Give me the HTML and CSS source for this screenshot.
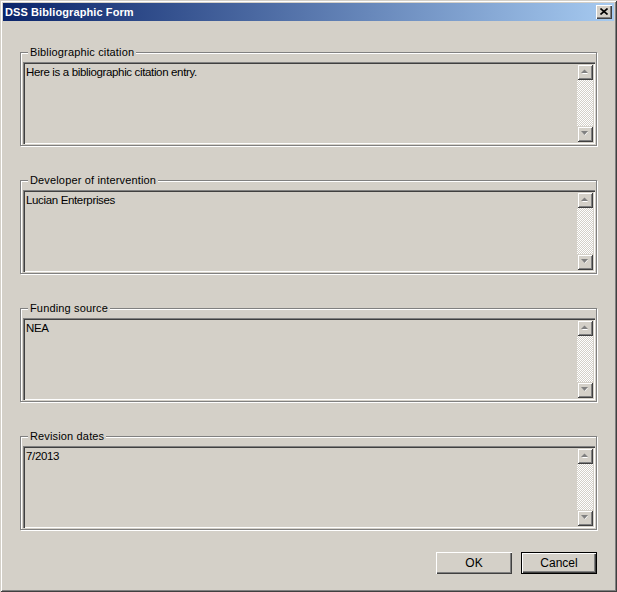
FILE: index.html
```html
<!DOCTYPE html>
<html>
<head>
<meta charset="utf-8">
<title>DSS Bibliographic Form</title>
<link rel="stylesheet" href="styles.css">
</head>
<body>
<div class="window">
  <div class="titlebar">
    <span class="title">DSS Bibliographic Form</span>
    <div class="close">
      <svg width="8" height="7" viewBox="0 0 8 7"><path d="M0.5 0.5 L7.5 6.5 M7.5 0.5 L0.5 6.5" stroke="#000" stroke-width="1.6" fill="none"/></svg>
    </div>
  </div>
  <div class="content">
    <div class="group">
      <div class="legend">Bibliographic citation</div>
      <div class="textbox">
        <div class="text">Here is a bibliographic citation entry.</div>
        <div class="scrollbar">
          <div class="sb-btn"><svg width="7" height="5" viewBox="0 0 7 5"><path d="M1 5 L7 5 L4 2 Z" fill="#fff"/><path d="M0 4 L7 4 L3.5 0.5 Z" fill="#808080"/></svg></div>
          <div class="sb-track"></div>
          <div class="sb-btn"><svg width="7" height="5" viewBox="0 0 7 5"><path d="M1 1 L7 1 L4 4.5 Z" fill="#fff"/><path d="M0 0 L7 0 L3.5 4 Z" fill="#808080"/></svg></div>
        </div>
      </div>
    </div>
    <div class="group">
      <div class="legend">Developer of intervention</div>
      <div class="textbox">
        <div class="text">Lucian Enterprises</div>
        <div class="scrollbar">
          <div class="sb-btn"><svg width="7" height="5" viewBox="0 0 7 5"><path d="M1 5 L7 5 L4 2 Z" fill="#fff"/><path d="M0 4 L7 4 L3.5 0.5 Z" fill="#808080"/></svg></div>
          <div class="sb-track"></div>
          <div class="sb-btn"><svg width="7" height="5" viewBox="0 0 7 5"><path d="M1 1 L7 1 L4 4.5 Z" fill="#fff"/><path d="M0 0 L7 0 L3.5 4 Z" fill="#808080"/></svg></div>
        </div>
      </div>
    </div>
    <div class="group">
      <div class="legend">Funding source</div>
      <div class="textbox">
        <div class="text">NEA</div>
        <div class="scrollbar">
          <div class="sb-btn"><svg width="7" height="5" viewBox="0 0 7 5"><path d="M1 5 L7 5 L4 2 Z" fill="#fff"/><path d="M0 4 L7 4 L3.5 0.5 Z" fill="#808080"/></svg></div>
          <div class="sb-track"></div>
          <div class="sb-btn"><svg width="7" height="5" viewBox="0 0 7 5"><path d="M1 1 L7 1 L4 4.5 Z" fill="#fff"/><path d="M0 0 L7 0 L3.5 4 Z" fill="#808080"/></svg></div>
        </div>
      </div>
    </div>
    <div class="group">
      <div class="legend">Revision dates</div>
      <div class="textbox">
        <div class="text">7/2013</div>
        <div class="scrollbar">
          <div class="sb-btn"><svg width="7" height="5" viewBox="0 0 7 5"><path d="M1 5 L7 5 L4 2 Z" fill="#fff"/><path d="M0 4 L7 4 L3.5 0.5 Z" fill="#808080"/></svg></div>
          <div class="sb-track"></div>
          <div class="sb-btn"><svg width="7" height="5" viewBox="0 0 7 5"><path d="M1 1 L7 1 L4 4.5 Z" fill="#fff"/><path d="M0 0 L7 0 L3.5 4 Z" fill="#808080"/></svg></div>
        </div>
      </div>
    </div>
    <div class="buttons">
      <div class="btn">OK</div>
      <div class="btn default">Cancel</div>
    </div>
  </div>
</div>
</body>
</html>
```
FILE: styles.css
```css
* { box-sizing: border-box; }
html, body { margin: 0; padding: 0; background: #d4d0c8; }
body {
  font-family: "Liberation Sans", Arial, sans-serif;
  font-size: 11px;
  color: #000;
}
.window {
  width: 617px;
  height: 592px;
  padding: 3px;
  background: #d4d0c8;
  box-shadow: inset 1px 1px 0 #d4d0c8, inset -1px -1px 0 #404040,
              inset 2px 2px 0 #fff, inset -2px -2px 0 #808080;
  display: flex;
  flex-direction: column;
}
.titlebar {
  height: 18px;
  flex: none;
  display: flex;
  align-items: center;
  justify-content: space-between;
  padding: 0 2px 0 2px;
  background: linear-gradient(to right, #0a246a, #a6caf0);
}
.title {
  color: #fff;
  font-weight: bold;
  font-size: 11px;
  letter-spacing: 0.1px;
}
.close {
  width: 16px;
  height: 14px;
  background: #d4d0c8;
  box-shadow: inset 1px 1px 0 #fff, inset -1px -1px 0 #404040, inset -2px -2px 0 #808080;
  display: flex;
  align-items: center;
  justify-content: center;
  padding: 0 1px 1px 0;
}
.close svg { display: block; }
.content {
  flex: 1;
  display: flex;
  flex-direction: column;
  padding: 31px 17px 0 17px;
}
.group {
  height: 94px;
  flex: none;
  border: 1px solid #808080;
  box-shadow: inset 1px 1px 0 #fff, 1px 1px 0 #fff;
  padding: 0 1px 1px 2px;
  margin-bottom: 34px;
  display: flex;
  flex-direction: column;
}
.group:nth-child(4) { margin-bottom: 22px; }
.legend {
  align-self: flex-start;
  margin: -7px 0 0 5px;
  padding: 0 2px;
  line-height: 13px;
  height: 13px;
  background: #d4d0c8;
  letter-spacing: 0.15px;
}
.textbox {
  flex: 1;
  margin-top: 3px;
  padding: 2px;
  display: flex;
  box-shadow: inset 1px 1px 0 #808080, inset 2px 2px 0 #404040,
              inset -1px -1px 0 #fff, inset -2px -2px 0 #d4d0c8;
}
.text {
  flex: 1;
  padding: 1px 1px;
  line-height: 14px;
  font-size: 11.5px;
  letter-spacing: -0.35px;
}
.scrollbar {
  width: 16px;
  flex: none;
  display: flex;
  flex-direction: column;
}
.sb-btn {
  width: 16px;
  height: 16px;
  flex: none;
  background: #d4d0c8;
  box-shadow: inset 1px 1px 0 #d4d0c8, inset -1px -1px 0 #404040,
              inset 2px 2px 0 #fff, inset -2px -2px 0 #808080;
  display: flex;
  align-items: center;
  justify-content: center;
  padding: 0 1px 1px 0;
}
.sb-btn svg { display: block; }
.sb-track {
  flex: 1;
  background: repeating-conic-gradient(#fff 0 25%, #d4d0c8 0 50%) 0 0 / 2px 2px;
}
.buttons {
  display: flex;
  justify-content: flex-end;
  gap: 9px;
}
.btn {
  width: 76px;
  height: 22px;
  display: flex;
  align-items: center;
  justify-content: center;
  background: #d4d0c8;
  box-shadow: inset 1px 1px 0 #fff, inset -1px -1px 0 #404040, inset -2px -2px 0 #808080;
  font-size: 12px;
}
.btn.default {
  box-shadow: inset 0 0 0 1px #000, inset 2px 2px 0 #fff, inset -2px -2px 0 #404040, inset -3px -3px 0 #808080;
}
```
